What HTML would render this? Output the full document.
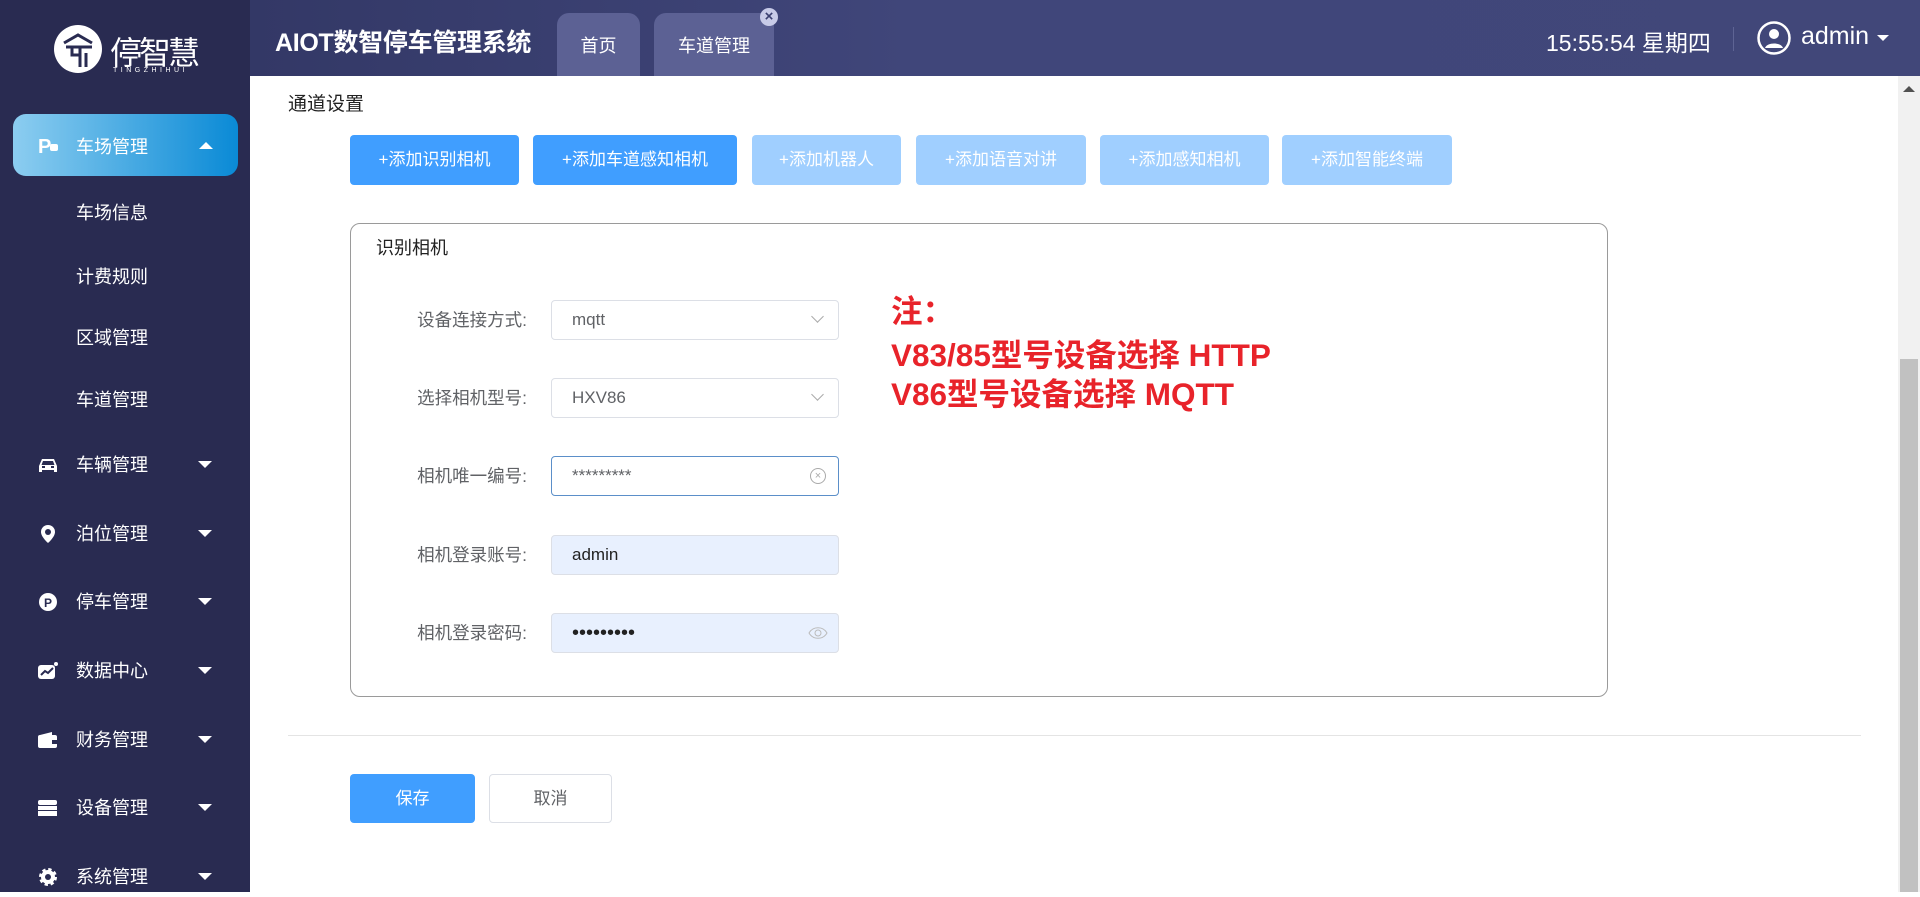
<!DOCTYPE html>
<html><head><meta charset="utf-8"><style>
*{margin:0;padding:0;box-sizing:border-box}
body{width:1920px;height:892px;overflow:hidden;position:relative;background:#fff;font-family:"Liberation Sans","Noto Sans CJK SC",sans-serif}
.abs{position:absolute}
#side{left:0;top:0;width:250px;height:892px;background:#292b51}
#head{left:250px;top:0;width:1670px;height:76px;background:linear-gradient(90deg,#333866,#40467a 40%,#414779)}
.tab{top:13px;height:63px;background:#5c6194;border-radius:12px 12px 0 0;color:#fff;font-size:18px;text-align:center;line-height:66px}
.mi{left:0;width:250px;color:#fff;font-size:18px;height:40px;line-height:40px}
.mi span{position:absolute;left:76px}
.mi .ic{position:absolute;left:38px;top:11px;width:20px;height:18px}
.mi .car{position:absolute;left:198px;top:16px;width:0;height:0;border-left:7px solid transparent;border-right:7px solid transparent;border-top:7px solid #fff}
.btn{top:135px;height:50px;border-radius:4px;color:#fff;font-size:17px;text-align:center;line-height:50px}
.b1{background:#409eff}.b2{background:#a0cfff}
.lab{left:370px;width:157px;text-align:right;font-size:17.5px;color:#606266;height:40px;line-height:40px}
.inp{left:551px;width:288px;height:40px;border:1px solid #dcdfe6;border-radius:4px;font-size:17px;color:#606266;line-height:38px;padding-left:20px}
.note{left:891px;color:#e8232a;font-size:31.5px;font-weight:bold;white-space:nowrap}
</style></head><body>
<div id="side" class="abs">
 <div class="abs" style="left:54px;top:25px;width:48px;height:48px;border-radius:50%;background:#fff"></div>
 <svg class="abs" style="left:54px;top:25px" width="48" height="48" viewBox="0 0 48 48"><path d="M10 18 L24 10 L38 18 M12 22 H38 M18 22 V30 H26 M26 22 V42 M32 28 V42" stroke="#292b51" stroke-width="3" fill="none"/></svg>
 <div class="abs" style="left:110px;top:28px;color:#fff;font-size:32px;letter-spacing:-3px">停智慧</div>
 <div class="abs" style="left:113px;top:67px;color:#fff;font-size:7px;letter-spacing:3.5px">TINGZHIHUI</div>
 <div class="abs" style="left:13px;top:114px;width:225px;height:62px;border-radius:13px;background:linear-gradient(90deg,#8ccdf0,#0a8ad6)"></div>
 <div class="mi abs" style="top:127px"><div class="ic" style="color:#fff;font-weight:bold;font-size:20px;line-height:18px;left:38px">P<span style="position:absolute;left:12px;top:6px;width:8px;height:7px;background:#fff;border-radius:2px"></span></div><span>车场管理</span><div class="abs" style="left:199px;top:15px;border-left:7px solid transparent;border-right:7px solid transparent;border-bottom:7px solid #fff"></div></div>
 <div class="mi abs" style="top:193px"><span>车场信息</span></div>
 <div class="mi abs" style="top:257px"><span>计费规则</span></div>
 <div class="mi abs" style="top:318px"><span>区域管理</span></div>
 <div class="mi abs" style="top:380px"><span>车道管理</span></div>
 <div class="mi abs" style="top:445px"><svg class="ic" viewBox="0 0 20 18"><path d="M4 3h12l3 7v6h-3v-2H4v2H1v-6z" fill="#fff"/><rect x="4" y="10" width="3" height="2" fill="#292b51"/><rect x="13" y="10" width="3" height="2" fill="#292b51"/><path d="M5 5h10l1.5 4h-13z" fill="#292b51"/></svg><span>车辆管理</span><div class="car"></div></div>
 <div class="mi abs" style="top:514px"><svg class="ic" viewBox="0 0 20 18"><path d="M10 0a7 7 0 0 1 7 7c0 5-7 11-7 11S3 12 3 7a7 7 0 0 1 7-7z" fill="#fff"/><circle cx="10" cy="7" r="3" fill="#292b51"/></svg><span>泊位管理</span><div class="car"></div></div>
 <div class="mi abs" style="top:582px"><svg class="ic" viewBox="0 0 20 18"><circle cx="10" cy="9" r="9" fill="#fff"/><text x="10" y="14" font-size="12" font-weight="bold" text-anchor="middle" fill="#292b51" font-family="Liberation Sans">P</text></svg><span>停车管理</span><div class="car"></div></div>
 <div class="mi abs" style="top:651px"><svg class="ic" viewBox="0 0 20 18"><rect x="0" y="3" width="17" height="14" rx="3" fill="#fff"/><path d="M3 13l4-4 3 2 5-5" stroke="#292b51" stroke-width="2" fill="none"/><circle cx="18" cy="2" r="2" fill="#fff"/></svg><span>数据中心</span><div class="car"></div></div>
 <div class="mi abs" style="top:720px"><svg class="ic" viewBox="0 0 20 18"><rect x="0" y="4" width="19" height="13" rx="2" fill="#fff"/><path d="M2 4l12-3v3z" fill="#fff"/><rect x="14" y="9" width="6" height="4" fill="#292b51"/></svg><span>财务管理</span><div class="car"></div></div>
 <div class="mi abs" style="top:788px"><svg class="ic" viewBox="0 0 20 18"><rect x="0" y="1" width="19" height="5" rx="2" fill="#fff"/><rect x="0" y="7" width="19" height="4" fill="#fff"/><rect x="0" y="12" width="19" height="5" fill="#fff"/></svg><span>设备管理</span><div class="car"></div></div>
 <div class="mi abs" style="top:857px"><svg class="ic" viewBox="0 0 20 18"><circle cx="10" cy="9" r="7" fill="#fff" stroke="#fff" stroke-width="4" stroke-dasharray="3 2.5"/><circle cx="10" cy="9" r="3" fill="#292b51"/></svg><span>系统管理</span><div class="car"></div></div>
</div>
<div id="head" class="abs">
 <div class="abs" style="left:25px;top:23px;color:#fff;font-size:25px;font-weight:bold;letter-spacing:-0.3px">AIOT数智停车管理系统</div>
 <div class="tab abs" style="left:307px;width:83px">首页</div>
 <div class="tab abs" style="left:404px;width:120px">车道管理</div>
 <div class="abs" style="left:510px;top:8px;width:18px;height:18px;border-radius:50%;background:#c8cbe8;color:#3a3f70;font-size:15px;line-height:18px;text-align:center;font-weight:bold">×</div>
 <div class="abs" style="left:1296px;top:24px;color:#fff;font-size:23px">15:55:54 星期四</div>
 <div class="abs" style="left:1483px;top:27px;width:1px;height:24px;background:#5e6494"></div>
 <svg class="abs" style="left:1506px;top:20px" width="36" height="36" viewBox="0 0 36 36"><circle cx="18" cy="18" r="15.5" stroke="#fff" stroke-width="2.5" fill="none"/><circle cx="18" cy="14" r="5" fill="#fff"/><path d="M9 28c2-6 16-6 18 0" fill="#fff"/></svg>
 <div class="abs" style="left:1551px;top:22px;color:#fff;font-size:25px">admin</div>
 <div class="abs" style="left:1627px;top:35px;border-left:6px solid transparent;border-right:6px solid transparent;border-top:6px solid #fff"></div>
</div>
<div class="abs" style="left:1898px;top:76px;width:22px;height:816px;background:#f1f1f1"></div>
<div class="abs" style="left:1903px;top:86px;border-left:6px solid transparent;border-right:6px solid transparent;border-bottom:6px solid #505050"></div>
<div class="abs" style="left:1900px;top:359px;width:18px;height:533px;background:#c1c1c1"></div>
<div class="abs" style="left:288px;top:89px;font-size:19px;color:#222">通道设置</div>
<div class="btn b1 abs" style="left:350px;width:169px">+添加识别相机</div>
<div class="btn b1 abs" style="left:533px;width:204px">+添加车道感知相机</div>
<div class="btn b2 abs" style="left:752px;width:149px">+添加机器人</div>
<div class="btn b2 abs" style="left:916px;width:170px">+添加语音对讲</div>
<div class="btn b2 abs" style="left:1100px;width:169px">+添加感知相机</div>
<div class="btn b2 abs" style="left:1282px;width:170px">+添加智能终端</div>
<div class="abs" style="left:350px;top:223px;width:1258px;height:474px;border:1px solid #9a9a9a;border-radius:10px"></div>
<div class="abs" style="left:376px;top:234px;font-size:18px;color:#222">识别相机</div>
<div class="lab abs" style="top:300px">设备连接方式:</div>
<div class="lab abs" style="top:378px">选择相机型号:</div>
<div class="lab abs" style="top:456px">相机唯一编号:</div>
<div class="lab abs" style="top:535px">相机登录账号:</div>
<div class="lab abs" style="top:613px">相机登录密码:</div>
<div class="inp abs" style="top:300px">mqtt<div class="abs" style="right:16px;top:11px;width:9px;height:9px;border-right:1px solid #aaa;border-bottom:1px solid #aaa;transform:rotate(45deg)"></div></div>
<div class="inp abs" style="top:378px">HXV86<div class="abs" style="right:16px;top:11px;width:9px;height:9px;border-right:1px solid #aaa;border-bottom:1px solid #aaa;transform:rotate(45deg)"></div></div>
<div class="inp abs" style="top:456px;border-color:#5b8fc9">*********<div class="abs" style="right:12px;top:11px;width:16px;height:16px;border:1px solid #aaa;border-radius:50%;font-size:11px;line-height:14px;text-align:center;color:#aaa">×</div></div>
<div class="inp abs" style="top:535px;background:#e8f0fe;color:#222">admin</div>
<div class="inp abs" style="top:613px;background:#e8f0fe;color:#222;font-size:20px">•••••••••<svg class="abs" style="right:10px;top:12px" width="20" height="14" viewBox="0 0 20 14"><path d="M1 7C5 0 15 0 19 7C15 14 5 14 1 7z" stroke="#bbb" fill="none"/><circle cx="10" cy="7" r="3" stroke="#bbb" fill="none"/></svg></div>
<div class="note abs" style="top:286px">注：</div>
<div class="note abs" style="top:330px">V83/85型号设备选择 HTTP</div>
<div class="note abs" style="top:369px">V86型号设备选择 MQTT</div>
<div class="abs" style="left:288px;top:735px;width:1573px;height:1px;background:#e4e4e4"></div>
<div class="abs" style="left:350px;top:774px;width:125px;height:49px;background:#409eff;border-radius:4px;color:#fff;font-size:17px;text-align:center;line-height:49px">保存</div>
<div class="abs" style="left:489px;top:774px;width:123px;height:49px;border:1px solid #dcdfe6;border-radius:4px;color:#606266;font-size:17px;text-align:center;line-height:47px">取消</div>
</body></html>
